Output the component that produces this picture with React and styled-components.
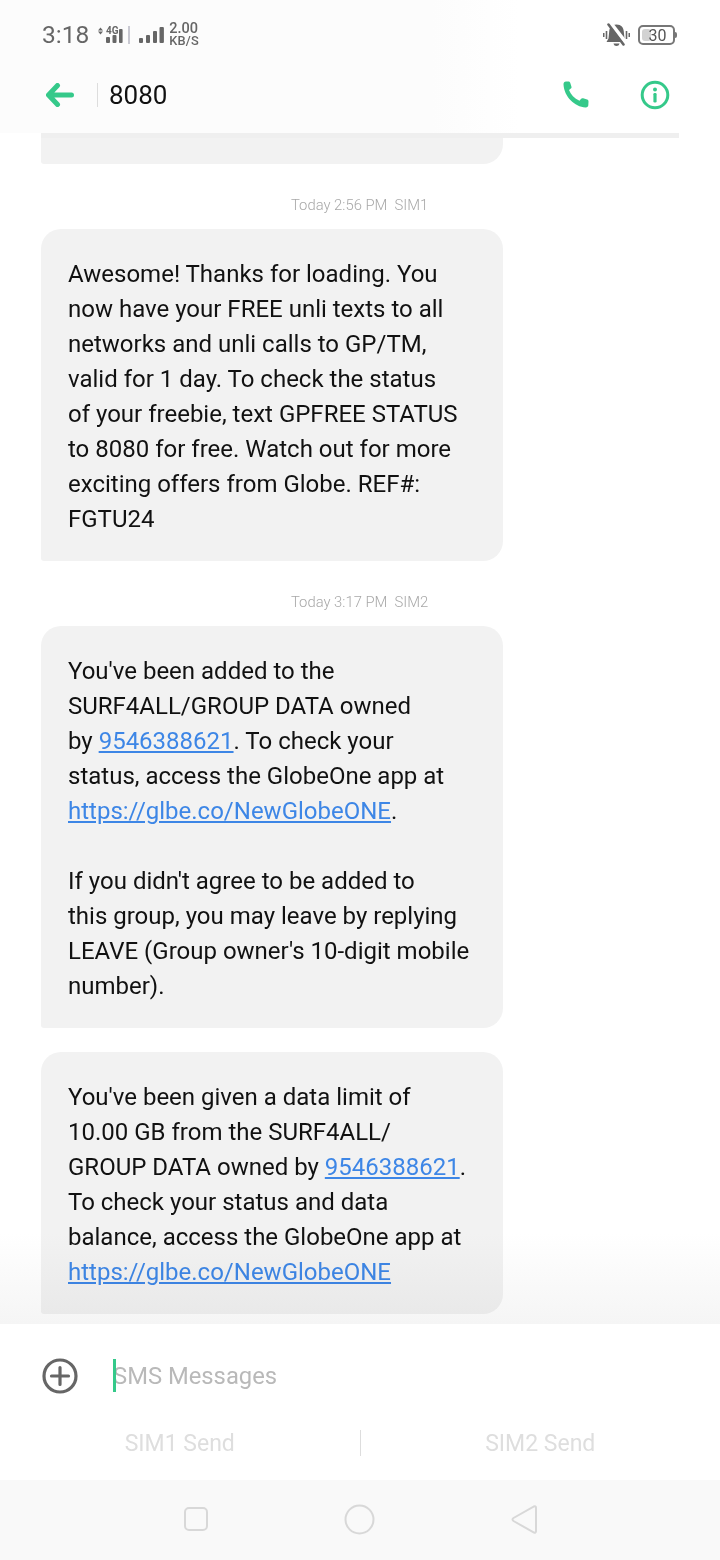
import React from 'react';
import styled, { createGlobalStyle } from 'styled-components';

const Global = createGlobalStyle`
  html, body { margin: 0; padding: 0; background: #ffffff; }
  body { font-family: Roboto, "Liberation Sans", sans-serif; }
`;

const GREEN = '#35c98a';

const Page = styled.div`
  width: 720px;
  height: 1560px;
  display: flex;
  flex-direction: column;
  background: #ffffff;
  overflow: hidden;
`;

// HEADER
const Header = styled.header`
  height: 133px;
  flex: none;
  display: flex;
  flex-direction: column;
  background: linear-gradient(to right, #fcfcfc 0, #fcfcfc 60%, #ffffff 72%);
`;

const StatusBar = styled.div`
  height: 70px;
  padding: 0 41px 0 42px;
  display: flex;
  align-items: center;
  color: #666666;
`;

const Time = styled.span`
  font-size: 24.5px;
  line-height: 70px;
`;

const StatusSpacer = styled.div`
  flex: 1;
`;

const Speed = styled.div`
  display: flex;
  flex-direction: column;
  margin-left: 5px;
  font-weight: 500;
  white-space: nowrap;
`;

const SpeedValue = styled.span`
  font-size: 14.5px;
  line-height: 12px;
`;

const SpeedUnit = styled.span`
  font-size: 12.8px;
  line-height: 12px;
  letter-spacing: 0.2px;
`;

const Battery = styled.div`
  position: relative;
  width: 33px;
  height: 16px;
  margin-left: 8px;
  margin-right: 4px;
  border: 2px solid #777777;
  border-radius: 5px;
  display: flex;
  align-items: center;
  justify-content: center;
  font-size: 16px;
  color: #555555;
  &::before {
    content: '';
    position: absolute;
    left: 2px;
    top: 2px;
    bottom: 2px;
    width: 9px;
    background: #d2d2d2;
    border-radius: 3px;
  }
  &::after {
    content: '';
    position: absolute;
    right: -4px;
    top: 5px;
    width: 2px;
    height: 6px;
    background: #777777;
    border-radius: 0 2px 2px 0;
  }
`;

const BatteryLevel = styled.span`
  position: relative;
  left: 1px;
`;

const TitleBar = styled.div`
  height: 50px;
  padding: 0 41px 0 46px;
  display: flex;
  align-items: center;
`;

const Divider = styled.div`
  width: 1px;
  height: ${p => p.$h}px;
  margin-left: ${p => p.$ml}px;
  background: #dddddd;
  flex: none;
`;

const Contact = styled.span`
  margin-left: 11px;
  font-size: 26px;
  color: #111111;
`;

const TitleIcons = styled.div`
  margin-left: auto;
  display: flex;
  align-items: center;
  gap: 50px;
  padding-right: 9px;
`;

// THREAD
const Thread = styled.main`
  position: relative;
  flex: 1;
  min-height: 0;
  overflow: hidden;
  display: flex;
  flex-direction: column;
  align-items: flex-start;
  padding: 0 41px;
  &::before {
    content: '';
    position: absolute;
    left: 41px;
    right: 41px;
    top: 0;
    height: 5px;
    background: #efefef;
    z-index: 1;
  }
  &::after {
    content: '';
    position: absolute;
    left: 0;
    right: 0;
    bottom: 0;
    height: 90px;
    background: linear-gradient(to bottom, #ffffff, #f5f5f5);
    mix-blend-mode: multiply;
  }
`;

const Stamp = styled.div`
  width: 462px;
  margin: 32px 0 15px;
  padding-left: 250px;
  box-sizing: border-box;
  font-size: 14.8px;
  font-weight: 300;
  line-height: 18px;
  color: #a8a8a8;
  white-space: pre;
`;

const Bubble = styled.div`
  width: 462px;
  box-sizing: border-box;
  flex: none;
  background: #f2f2f2;
  border-radius: 20px 20px 20px 3px;
  padding: 28px 0 24px 27px;
  font-size: 24px;
  line-height: 35px;
  color: #111111;
  white-space: nowrap;
  margin-top: ${p => p.$gap || 0}px;
`;

const StubBubble = styled.div`
  width: 462px;
  height: 31px;
  flex: none;
  background: #f2f2f2;
  border-radius: 0 0 20px 3px;
`;

const Link = styled.a`
  color: #3d86e6;
  text-decoration: underline;
`;

// COMPOSER
const Composer = styled.section`
  height: 156px;
  flex: none;
  display: flex;
  flex-direction: column;
  background: #ffffff;
`;

const InputRow = styled.div`
  height: 103px;
  padding-left: 42px;
  display: flex;
  align-items: center;
`;

const Caret = styled.div`
  width: 3px;
  height: 33px;
  margin-left: 35px;
  background: ${GREEN};
  flex: none;
  position: relative;
  z-index: 1;
`;

const Placeholder = styled.span`
  margin-left: -3px;
  font-size: 23.8px;
  color: #b9b9b9;
`;

const SendRow = styled.div`
  height: 32px;
  display: flex;
  align-items: center;
`;

const SendButton = styled.div`
  flex: 1;
  text-align: center;
  font-size: 23px;
  color: #dedede;
`;

// NAV BAR
const NavBar = styled.nav`
  height: 80px;
  flex: none;
  background: #f9f9f9;
  display: flex;
  align-items: center;
  justify-content: center;
  gap: 135px;
  padding-bottom: 2px;
  box-sizing: border-box;
`;

function Signal({ lte }) {
  return (
    <svg width={lte ? 32 : 25} height="20" viewBox={lte ? '0 0 32 20' : '0 0 25 20'} fill="#666666" style={{ marginLeft: 9, flex: 'none' }}>
      {lte ? (
        <>
          <path d="M2.500 2.500 5 5.500H0zM2.500 9.500 0 6.500h5z" />
          <text x="8" y="8.500" fontSize="10" fontWeight="700" fontFamily="Roboto, sans-serif">4G</text>
          <rect x="8" y="12" width="4" height="6" rx="1" />
          <rect x="14.500" y="10" width="4" height="8" rx="1" />
          <rect x="21" y="4" width="3.600" height="14" rx="1" />
          <rect x="30" y="1" width="2" height="18" fill="#c9c9d2" />
        </>
      ) : (
        <>
          <rect x="0" y="13" width="4" height="5" rx="1" />
          <rect x="7" y="10" width="4" height="8" rx="1" />
          <rect x="14" y="6" width="4" height="12" rx="1" />
          <rect x="20.500" y="2" width="4.400" height="16" rx="1" />
        </>
      )}
    </svg>
  );
}

function MuteBell() {
  return (
    <svg width="27" height="24" viewBox="0 0 27 24" fill="#666666">
      <path d="M13.500 1.500c4.800 0 7 3 7.300 7l.7 7 2 3.500H3.500l2-3.500.7-7c.3-4 2.500-7 7.300-7z" />
      <path d="M10.500 20.500h6c-.4 1.700-1.500 2.500-3 2.500s-2.600-.8-3-2.500z" />
      <path d="M0 10h1.500v4H0zM2.700 8h1.600v8H2.700zM22.700 8h1.600v8h-1.600zM25.500 10H27v4h-1.500z" />
      <path d="M7.500 0 23 20" stroke="#ffffff" strokeWidth="4" />
      <path d="M5.500 1.500 20.500 21.500" stroke="#666666" strokeWidth="2.600" strokeLinecap="round" />
    </svg>
  );
}

function BackArrow() {
  return (
    <svg width="28" height="24" viewBox="0 0 28 24">
      <path d="M11.500 2.500 2.500 12l9 9.500M3.500 12h22" fill="none" stroke={GREEN} strokeWidth="5" strokeLinecap="round" strokeLinejoin="round" />
    </svg>
  );
}

function PhoneIcon() {
  return (
    <svg width="28" height="28" viewBox="0 0 28 28" fill={GREEN}>
      <path d="M1.500 3.400C1.400 1.700 2.500.6 4 .5l2.200-.1c1 0 1.700.5 2 1.400l1.200 3.600c.3.900.1 1.600-.6 2.200L7 9c1.800 4.500 5.300 8.500 10.500 10.700l1.400-1.800c.6-.7 1.400-.9 2.300-.6l3.900 1.300c1 .3 1.500 1.100 1.400 2.100l-.2 3.600c-.1 1.400-1.200 2.300-2.700 2.200C12.500 25.600 2.200 15.600 1.500 3.400z" />
    </svg>
  );
}

function InfoIcon() {
  return (
    <svg width="30" height="30" viewBox="0 0 30 30">
      <circle cx="15" cy="15" r="12.800" fill="none" stroke={GREEN} strokeWidth="3" />
      <circle cx="15" cy="9.500" r="2" fill={GREEN} />
      <rect x="13.400" y="13" width="3.200" height="9.500" rx="1.200" fill={GREEN} />
    </svg>
  );
}

function PlusIcon() {
  return (
    <svg width="36" height="36" viewBox="0 0 36 36" style={{ flex: 'none' }}>
      <circle cx="18" cy="18" r="16" fill="none" stroke="#666666" strokeWidth="3.200" />
      <path d="M18 9.500v17M9.500 18h17" stroke="#666666" strokeWidth="3.200" strokeLinecap="round" />
    </svg>
  );
}

function NavSquare() {
  return (
    <svg width="26" height="26" viewBox="0 0 26 26">
      <rect x="2" y="2" width="22" height="22" rx="4" fill="none" stroke="#d8d8d8" strokeWidth="2" />
    </svg>
  );
}

function NavCircle() {
  return (
    <svg width="31" height="31" viewBox="0 0 31 31">
      <circle cx="15.500" cy="15.500" r="14" fill="none" stroke="#d8d8d8" strokeWidth="2" />
    </svg>
  );
}

function NavBack() {
  return (
    <svg width="28" height="31" viewBox="0 0 28 31">
      <path d="M24 2.500c1 -.4 2 0 2 1.200v23.600c0 1.200-1 1.600-2 1.200L3.500 17c-1.300-.8-1.300-2.200 0-3z" fill="none" stroke="#d8d8d8" strokeWidth="2" />
    </svg>
  );
}

export default function App() {
  return (
    <Page>
      <Global />
      <Header>
        <StatusBar>
          <Time>3:18</Time>
          <Signal lte />
          <Signal />
          <Speed>
            <SpeedValue>2.00</SpeedValue>
            <SpeedUnit>KB/S</SpeedUnit>
          </Speed>
          <StatusSpacer />
          <MuteBell />
          <Battery>
            <BatteryLevel>30</BatteryLevel>
          </Battery>
        </StatusBar>
        <TitleBar>
          <BackArrow />
          <Divider $h={24} $ml={23} />
          <Contact>8080</Contact>
          <TitleIcons>
            <PhoneIcon />
            <InfoIcon />
          </TitleIcons>
        </TitleBar>
      </Header>

      <Thread>
        <StubBubble />
        <Stamp>{'Today 2:56 PM  SIM1'}</Stamp>
        <Bubble>
          Awesome! Thanks for loading. You<br />
          now have your FREE unli texts to all<br />
          networks and unli calls to GP/TM,<br />
          valid for 1 day. To check the status<br />
          of your freebie, text GPFREE STATUS<br />
          to 8080 for free. Watch out for more<br />
          exciting offers from Globe. REF#:<br />
          FGTU24
        </Bubble>
        <Stamp>{'Today 3:17 PM  SIM2'}</Stamp>
        <Bubble>
          You've been added to the<br />
          SURF4ALL/GROUP DATA owned<br />
          by <Link>9546388621</Link>. To check your<br />
          status, access the GlobeOne app at<br />
          <Link>https://glbe.co/NewGlobeONE</Link>.<br />
          <br />
          If you didn't agree to be added to<br />
          this group, you may leave by replying<br />
          LEAVE (Group owner's 10-digit mobile<br />
          number).
        </Bubble>
        <Bubble $gap={24}>
          You've been given a data limit of<br />
          10.00 GB from the SURF4ALL/<br />
          GROUP DATA owned by <Link>9546388621</Link>.<br />
          To check your status and data<br />
          balance, access the GlobeOne app at<br />
          <Link>https://glbe.co/NewGlobeONE</Link>
        </Bubble>
      </Thread>

      <Composer>
        <InputRow>
          <PlusIcon />
          <Caret />
          <Placeholder>SMS Messages</Placeholder>
        </InputRow>
        <SendRow>
          <SendButton>SIM1 Send</SendButton>
          <Divider $h={26} $ml={0} />
          <SendButton>SIM2 Send</SendButton>
        </SendRow>
      </Composer>

      <NavBar>
        <NavSquare />
        <NavCircle />
        <NavBack />
      </NavBar>
    </Page>
  );
}
